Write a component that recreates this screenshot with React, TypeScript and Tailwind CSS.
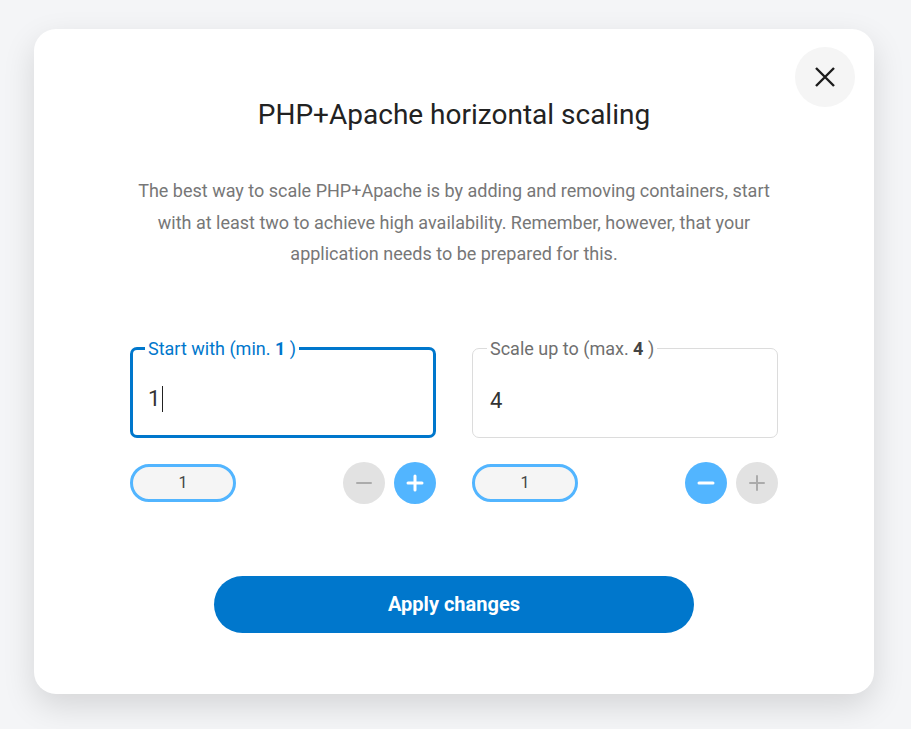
import { useState } from 'react'

function Stepper({ minusActive, plusActive }: { minusActive: boolean; plusActive: boolean }) {
  const on = 'bg-[#52b5ff] text-white'
  const off = 'bg-[#e2e2e2] text-[#ababab]'
  return (
    <div className="mt-[24px] flex items-center justify-between">
      <div className="flex h-[38px] w-[106px] items-center justify-center rounded-full border-[3px] border-[#52b5ff] bg-[#f5f5f5] text-[16px] text-[#444]">
        1
      </div>
      <div className="flex gap-[9px]">
        <button className={`flex h-[42px] w-[42px] items-center justify-center rounded-full ${minusActive ? on : off}`}>
          <svg width="20" height="20" viewBox="0 0 20 20">
            <path d="M3 10h14" stroke="currentColor" strokeWidth={minusActive ? 3 : 2} strokeLinecap="round" />
          </svg>
        </button>
        <button className={`flex h-[42px] w-[42px] items-center justify-center rounded-full ${plusActive ? on : off}`}>
          <svg width="20" height="20" viewBox="0 0 20 20">
            <path d="M3 10h14M10 3v14" stroke="currentColor" strokeWidth={plusActive ? 3 : 2} strokeLinecap="round" />
          </svg>
        </button>
      </div>
    </div>
  )
}

export default function App() {
  const [start] = useState('1')
  return (
    <div className="flex min-h-[729px] bg-[#f4f5f7] pl-[34px] pt-[29px] font-['Roboto',sans-serif]">
      <div className="relative h-[665px] w-[840px] rounded-[22px] bg-white px-[96px] pt-[68px] shadow-[0_12px_32px_rgba(0,0,0,0.13)]">
        {/* Close */}
        <button className="absolute right-[19px] top-[18px] flex h-[60px] w-[60px] items-center justify-center rounded-full bg-[#f5f5f5]">
          <svg width="24" height="24" viewBox="0 0 24 24" fill="none">
            <path d="M3 3l18 18M21 3L3 21" stroke="#1b1b1b" strokeWidth="2.4" />
          </svg>
        </button>

        <h1 className="text-center text-[28px] leading-[36px] text-[#222]">PHP+Apache horizontal scaling</h1>
        <p className="mx-auto mt-[42px] w-[646px] text-center text-[18px] leading-[31.5px] text-[#777]">
          The best way to scale PHP+Apache is by adding and removing containers, start with at least two to achieve high
          availability. Remember, however, that your application needs to be prepared for this.
        </p>

        <div className="mt-[70px] grid grid-cols-2 gap-[36px]">
          <div>
            <fieldset className="h-[98px] rounded-[7px] border-[3px] border-[#0077cc] pl-[12px] pr-3">
              <legend className="px-[3px] text-[18px] leading-[18px] text-[#0077cc]">
                Start with (min. <b className="font-bold">1</b> )
              </legend>
              <div className="ml-[3px] mt-[27px] flex items-center text-[22px] leading-[28px] text-[#333]">
                {start}
                <span className="ml-[2px] inline-block h-[26px] w-px bg-[#222]" />
              </div>
            </fieldset>
            <Stepper minusActive={false} plusActive={true} />
          </div>
          <div>
            <fieldset className="h-[98px] rounded-[7px] border border-[#dcdcdc] pl-[14px] pr-3">
              <legend className="px-[3px] text-[18px] leading-[18px] text-[#6f6f6f]">
                Scale up to (max. <b className="font-bold text-[#444]">4</b> )
              </legend>
              <div className="ml-[3px] mt-[29px] text-[22px] leading-[28px] text-[#333]">4</div>
            </fieldset>
            <Stepper minusActive={true} plusActive={false} />
          </div>
        </div>

        <div className="mt-[72px] flex justify-center">
          <button className="h-[57px] w-[480px] rounded-full bg-[#0077cc] text-[20px] font-bold text-white">
            Apply changes
          </button>
        </div>
      </div>
    </div>
  )
}
